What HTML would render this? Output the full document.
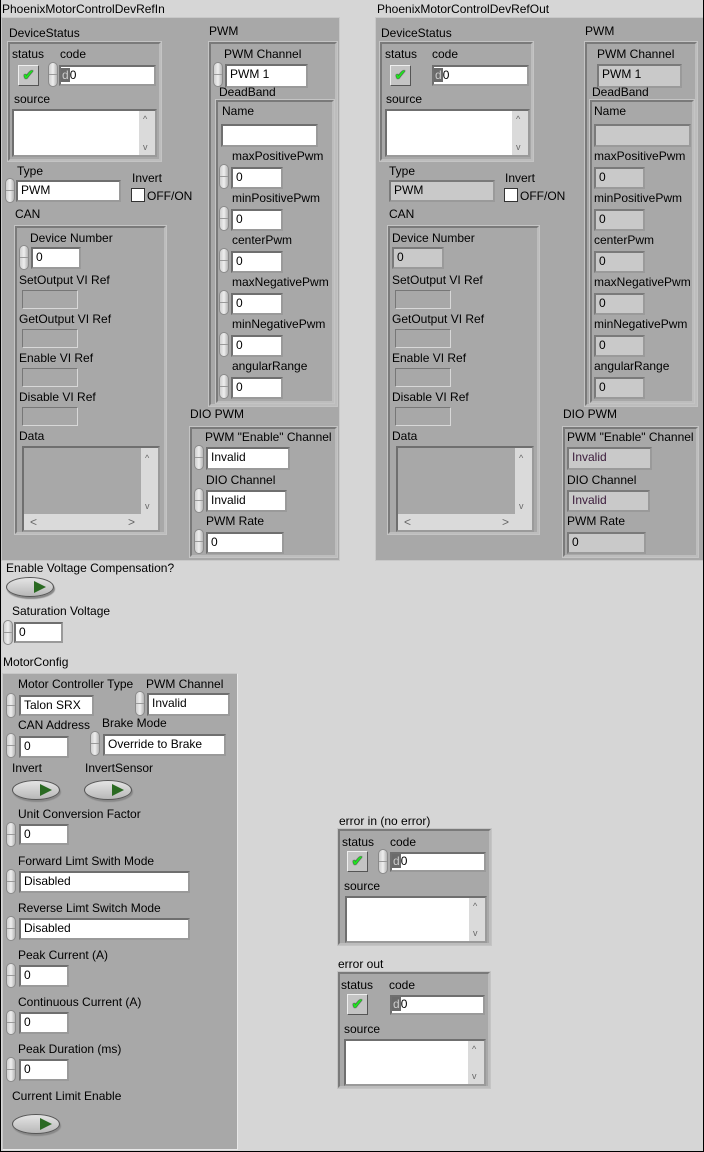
<!DOCTYPE html>
<html><head><meta charset="utf-8"><style>
*{box-sizing:border-box;margin:0;padding:0}
body{width:704px;height:1152px;background:#d6d6d6;font-family:"Liberation Sans",Tahoma,sans-serif;font-size:12px;color:#000;position:relative;overflow:hidden}
#frame{position:absolute;left:0;top:0;width:704px;height:1152px;border:1px solid #000;border-top:none;pointer-events:none}
div,span{position:absolute}
.l{white-space:nowrap;line-height:14px}
.c{background:#a8a8a8;border:2px solid #8c8c8c;border-color:#7a7a7a #bdbdbd #bdbdbd #7a7a7a;box-shadow:0 0 0 1px #c4c4c4}
.o{background:#a8a8a8;border:1px solid #c8c8c8}
.b{background:#fff;border:2px solid;border-color:#6f6f6f #9a9a9a #9a9a9a #6f6f6f;line-height:16px;padding-left:3px;white-space:nowrap}
.i{background:#c9c9c9;border:2px solid;border-color:#7a7a7a #9a9a9a #9a9a9a #7a7a7a;line-height:16px;padding-left:3px;white-space:nowrap}
.r{background:#a8a8a8;border:1px solid;border-color:#777 #d8d8d8 #d8d8d8 #777}
.s{width:10px;height:25px;border-radius:5px;background:linear-gradient(90deg,#cfcfcf,#eeeeee 50%,#b5b5b5);border:1px solid #8a8a8a}
.s:after{content:"";position:absolute;left:0;right:0;top:11px;height:1px;background:#999}
.ck{width:21px;height:21px;background:#c4c4c4;border:1px solid;border-color:#eee #555 #555 #eee;color:#22e022;font-size:15px;line-height:19px;text-align:center;text-shadow:0 0 1px #000,0 0 1px #000}
.tg{width:48px;height:20px;border-radius:50%;background:linear-gradient(#e4e4e4,#b8b8b8);border:1px solid #555;box-shadow:1px 2px 1px #888}
.tg:after{content:"";position:absolute;left:27px;top:3px;border-left:12px solid #2a6a22;border-top:6px solid transparent;border-bottom:6px solid transparent}
.cb{width:14px;height:14px;background:#fff;border:1px solid #333}
.sb{position:absolute;right:0;top:0;bottom:0;width:16px;background:#dadada;color:#666;font-size:9px;text-align:center}
.pu{color:#3a1a3a}
</style></head><body>

<!-- ===== IN cluster ===== -->
<div class="l" style="left:2px;top:2px">PhoenixMotorControlDevRefIn</div>
<div class="o" style="left:1px;top:17px;width:339px;height:544px"></div>
<div class="l" style="left:9px;top:26px">DeviceStatus</div>
<div class="c" style="left:8px;top:42px;width:153px;height:119px"></div>
<div class="l" style="left:12px;top:47px">status</div>
<div class="l" style="left:60px;top:47px">code</div>
<div class="ck" style="left:18px;top:65px">✔</div>
<div class="s" style="left:48px;top:62px"></div>
<div class="b" style="left:59px;top:65px;width:97px;height:21px;padding-left:0"><span style="position:static;background:#6b6b6b;color:#ccc;padding:0 1px">d</span>0</div>
<div class="l" style="left:14px;top:92px">source</div>
<div class="b" style="left:12px;top:109px;width:145px;height:48px"><div class="sb"><span style="left:4px;top:0">^</span><span style="left:4px;top:28px">v</span></div></div>
<div class="l" style="left:17px;top:164px">Type</div>
<div class="s" style="left:5px;top:178px"></div>
<div class="b" style="left:16px;top:180px;width:105px;height:22px">PWM</div>
<div class="l" style="left:132px;top:171px">Invert</div>
<div class="cb" style="left:131px;top:188px"></div>
<div class="l" style="left:147px;top:189px">OFF/ON</div>
<div class="l" style="left:15px;top:207px">CAN</div>
<div class="c" style="left:15px;top:226px;width:151px;height:308px"></div>
<div class="l" style="left:30px;top:231px">Device Number</div>
<div class="s" style="left:19px;top:245px"></div>
<div class="b" style="left:31px;top:247px;width:50px;height:22px">0</div>
<div class="l" style="left:19px;top:273px">SetOutput VI Ref</div>
<div class="r" style="left:22px;top:290px;width:56px;height:19px"></div>
<div class="l" style="left:19px;top:312px">GetOutput VI Ref</div>
<div class="r" style="left:22px;top:329px;width:56px;height:19px"></div>
<div class="l" style="left:19px;top:351px">Enable VI Ref</div>
<div class="r" style="left:22px;top:368px;width:56px;height:19px"></div>
<div class="l" style="left:19px;top:390px">Disable VI Ref</div>
<div class="r" style="left:22px;top:407px;width:56px;height:19px"></div>
<div class="l" style="left:19px;top:429px">Data</div>
<div class="b" style="left:22px;top:446px;width:138px;height:86px;background:#a8a8a8;padding:0"><div class="sb" style="bottom:16px;width:17px"><span style="left:4px;top:2px">^</span><span style="left:4px;top:50px">v</span></div><div style="left:0;right:0;bottom:0;height:16px;background:#dadada;color:#666"><span style="left:6px;top:0">&lt;</span><span style="left:104px;top:0">&gt;</span></div></div>

<div class="l" style="left:209px;top:24px">PWM</div>
<div class="c" style="left:209px;top:42px;width:128px;height:364px"></div>
<div class="l" style="left:224px;top:47px">PWM Channel</div>
<div class="s" style="left:213px;top:62px"></div>
<div class="b" style="left:225px;top:64px;width:83px;height:24px">PWM 1</div>
<div class="l" style="left:219px;top:85px">DeadBand</div>
<div class="c" style="left:216px;top:100px;width:118px;height:303px"></div>
<div class="l" style="left:222px;top:104px">Name</div>
<div class="b" style="left:221px;top:124px;width:97px;height:23px"></div>
<div class="l" style="left:232px;top:149px">maxPositivePwm</div>
<div class="s" style="left:219px;top:164px"></div>
<div class="b" style="left:231px;top:167px;width:52px;height:22px">0</div>
<div class="l" style="left:232px;top:191px">minPositivePwm</div>
<div class="s" style="left:219px;top:206px"></div>
<div class="b" style="left:231px;top:209px;width:52px;height:22px">0</div>
<div class="l" style="left:232px;top:233px">centerPwm</div>
<div class="s" style="left:219px;top:248px"></div>
<div class="b" style="left:231px;top:251px;width:52px;height:22px">0</div>
<div class="l" style="left:232px;top:275px">maxNegativePwm</div>
<div class="s" style="left:219px;top:290px"></div>
<div class="b" style="left:231px;top:293px;width:52px;height:22px">0</div>
<div class="l" style="left:232px;top:317px">minNegativePwm</div>
<div class="s" style="left:219px;top:332px"></div>
<div class="b" style="left:231px;top:335px;width:52px;height:22px">0</div>
<div class="l" style="left:232px;top:359px">angularRange</div>
<div class="s" style="left:219px;top:374px"></div>
<div class="b" style="left:231px;top:377px;width:52px;height:22px">0</div>
<div class="l" style="left:190px;top:407px">DIO PWM</div>
<div class="c" style="left:190px;top:427px;width:147px;height:130px"></div>
<div class="l" style="left:205px;top:430px">PWM "Enable" Channel</div>
<div class="s" style="left:194px;top:445px"></div>
<div class="b" style="left:206px;top:447px;width:84px;height:23px">Invalid</div>
<div class="l" style="left:206px;top:473px">DIO Channel</div>
<div class="s" style="left:194px;top:488px"></div>
<div class="b" style="left:206px;top:490px;width:81px;height:22px">Invalid</div>
<div class="l" style="left:206px;top:514px">PWM Rate</div>
<div class="s" style="left:194px;top:529px"></div>
<div class="b" style="left:206px;top:532px;width:78px;height:22px">0</div>

<!-- ===== OUT cluster ===== -->
<div class="l" style="left:377px;top:2px">PhoenixMotorControlDevRefOut</div>
<div class="o" style="left:375px;top:17px;width:329px;height:544px"></div>
<div class="l" style="left:381px;top:26px">DeviceStatus</div>
<div class="c" style="left:380px;top:42px;width:153px;height:119px"></div>
<div class="l" style="left:385px;top:47px">status</div>
<div class="l" style="left:432px;top:47px">code</div>
<div class="ck" style="left:390px;top:65px">✔</div>
<div class="b" style="left:432px;top:65px;width:97px;height:21px;padding-left:0"><span style="position:static;background:#6b6b6b;color:#ccc;padding:0 1px">d</span>0</div>
<div class="l" style="left:386px;top:92px">source</div>
<div class="b" style="left:385px;top:109px;width:145px;height:48px"><div class="sb"><span style="left:4px;top:0">^</span><span style="left:4px;top:28px">v</span></div></div>
<div class="l" style="left:389px;top:164px">Type</div>
<div class="i" style="left:389px;top:180px;width:106px;height:22px">PWM</div>
<div class="l" style="left:505px;top:171px">Invert</div>
<div class="cb" style="left:504px;top:188px"></div>
<div class="l" style="left:520px;top:189px">OFF/ON</div>
<div class="l" style="left:389px;top:207px">CAN</div>
<div class="c" style="left:388px;top:226px;width:151px;height:308px"></div>
<div class="l" style="left:392px;top:231px">Device Number</div>
<div class="i" style="left:392px;top:247px;width:52px;height:22px">0</div>
<div class="l" style="left:392px;top:273px">SetOutput VI Ref</div>
<div class="r" style="left:395px;top:290px;width:56px;height:19px"></div>
<div class="l" style="left:392px;top:312px">GetOutput VI Ref</div>
<div class="r" style="left:395px;top:329px;width:56px;height:19px"></div>
<div class="l" style="left:392px;top:351px">Enable VI Ref</div>
<div class="r" style="left:395px;top:368px;width:56px;height:19px"></div>
<div class="l" style="left:392px;top:390px">Disable VI Ref</div>
<div class="r" style="left:395px;top:407px;width:56px;height:19px"></div>
<div class="l" style="left:392px;top:429px">Data</div>
<div class="b" style="left:396px;top:446px;width:138px;height:86px;background:#a8a8a8;padding:0"><div class="sb" style="bottom:16px;width:17px"><span style="left:4px;top:2px">^</span><span style="left:4px;top:50px">v</span></div><div style="left:0;right:0;bottom:0;height:16px;background:#dadada;color:#666"><span style="left:6px;top:0">&lt;</span><span style="left:104px;top:0">&gt;</span></div></div>

<div class="l" style="left:585px;top:24px">PWM</div>
<div class="c" style="left:585px;top:42px;width:112px;height:364px"></div>
<div class="l" style="left:597px;top:47px">PWM Channel</div>
<div class="i" style="left:597px;top:64px;width:85px;height:24px">PWM 1</div>
<div class="l" style="left:592px;top:85px">DeadBand</div>
<div class="c" style="left:590px;top:100px;width:104px;height:303px"></div>
<div class="l" style="left:594px;top:104px">Name</div>
<div class="i" style="left:594px;top:124px;width:97px;height:23px"></div>
<div class="l" style="left:594px;top:149px">maxPositivePwm</div>
<div class="i" style="left:594px;top:167px;width:51px;height:22px">0</div>
<div class="l" style="left:594px;top:191px">minPositivePwm</div>
<div class="i" style="left:594px;top:209px;width:51px;height:22px">0</div>
<div class="l" style="left:594px;top:233px">centerPwm</div>
<div class="i" style="left:594px;top:251px;width:51px;height:22px">0</div>
<div class="l" style="left:594px;top:275px">maxNegativePwm</div>
<div class="i" style="left:594px;top:293px;width:51px;height:22px">0</div>
<div class="l" style="left:594px;top:317px">minNegativePwm</div>
<div class="i" style="left:594px;top:335px;width:51px;height:22px">0</div>
<div class="l" style="left:594px;top:359px">angularRange</div>
<div class="i" style="left:594px;top:377px;width:51px;height:22px">0</div>
<div class="l" style="left:563px;top:407px">DIO PWM</div>
<div class="c" style="left:563px;top:427px;width:135px;height:130px"></div>
<div class="l" style="left:567px;top:430px">PWM "Enable" Channel</div>
<div class="i pu" style="left:567px;top:447px;width:85px;height:23px">Invalid</div>
<div class="l" style="left:567px;top:473px">DIO Channel</div>
<div class="i pu" style="left:567px;top:490px;width:83px;height:22px">Invalid</div>
<div class="l" style="left:567px;top:514px">PWM Rate</div>
<div class="i" style="left:567px;top:532px;width:79px;height:22px">0</div>

<!-- ===== middle ===== -->
<div class="l" style="left:6px;top:561px">Enable Voltage Compensation?</div>
<div class="tg" style="left:6px;top:577px"></div>
<div class="l" style="left:12px;top:604px">Saturation Voltage</div>
<div class="s" style="left:3px;top:620px"></div>
<div class="b" style="left:14px;top:622px;width:49px;height:21px">0</div>

<!-- ===== MotorConfig ===== -->
<div class="l" style="left:3px;top:655px">MotorConfig</div>
<div class="o" style="left:2px;top:673px;width:236px;height:477px;border-color:#c8c8c8 #e8e8e8 #e8e8e8 #c8c8c8"></div>
<div class="l" style="left:18px;top:677px">Motor Controller Type</div>
<div class="l" style="left:146px;top:677px">PWM Channel</div>
<div class="s" style="left:6px;top:693px"></div>
<div class="b" style="left:19px;top:695px;width:75px;height:21px">Talon SRX</div>
<div class="s" style="left:135px;top:691px"></div>
<div class="b" style="left:147px;top:693px;width:83px;height:23px">Invalid</div>
<div class="l" style="left:18px;top:718px">CAN Address</div>
<div class="l" style="left:102px;top:716px">Brake Mode</div>
<div class="s" style="left:6px;top:733px"></div>
<div class="b" style="left:19px;top:736px;width:50px;height:22px">0</div>
<div class="s" style="left:90px;top:731px"></div>
<div class="b" style="left:103px;top:734px;width:123px;height:22px">Override to Brake</div>
<div class="l" style="left:12px;top:761px">Invert</div>
<div class="l" style="left:85px;top:761px">InvertSensor</div>
<div class="tg" style="left:12px;top:780px"></div>
<div class="tg" style="left:84px;top:780px"></div>
<div class="l" style="left:18px;top:807px">Unit Conversion Factor</div>
<div class="s" style="left:6px;top:822px"></div>
<div class="b" style="left:19px;top:824px;width:50px;height:21px">0</div>
<div class="l" style="left:18px;top:854px">Forward Limt Swith Mode</div>
<div class="s" style="left:6px;top:869px"></div>
<div class="b" style="left:19px;top:871px;width:171px;height:22px">Disabled</div>
<div class="l" style="left:18px;top:901px">Reverse Limt Switch Mode</div>
<div class="s" style="left:6px;top:916px"></div>
<div class="b" style="left:19px;top:918px;width:171px;height:22px">Disabled</div>
<div class="l" style="left:18px;top:948px">Peak Current (A)</div>
<div class="s" style="left:6px;top:963px"></div>
<div class="b" style="left:19px;top:965px;width:50px;height:22px">0</div>
<div class="l" style="left:18px;top:995px">Continuous Current (A)</div>
<div class="s" style="left:6px;top:1010px"></div>
<div class="b" style="left:19px;top:1012px;width:50px;height:22px">0</div>
<div class="l" style="left:18px;top:1042px">Peak Duration (ms)</div>
<div class="s" style="left:6px;top:1057px"></div>
<div class="b" style="left:19px;top:1059px;width:50px;height:22px">0</div>
<div class="l" style="left:12px;top:1089px">Current Limit Enable</div>
<div class="tg" style="left:12px;top:1114px"></div>

<!-- ===== error in ===== -->
<div class="l" style="left:339px;top:814px">error in (no error)</div>
<div class="c" style="left:338px;top:829px;width:153px;height:116px"></div>
<div class="l" style="left:342px;top:835px">status</div>
<div class="l" style="left:390px;top:835px">code</div>
<div class="ck" style="left:347px;top:851px">✔</div>
<div class="s" style="left:378px;top:849px"></div>
<div class="b" style="left:390px;top:852px;width:96px;height:20px;padding-left:0;line-height:15px"><span style="position:static;background:#6b6b6b;color:#ccc;padding:0 1px">d</span>0</div>
<div class="l" style="left:344px;top:879px">source</div>
<div class="b" style="left:345px;top:896px;width:142px;height:47px"><div class="sb"><span style="left:4px;top:0">^</span><span style="left:4px;top:27px">v</span></div></div>

<!-- ===== error out ===== -->
<div class="l" style="left:338px;top:957px">error out</div>
<div class="c" style="left:338px;top:972px;width:152px;height:116px"></div>
<div class="l" style="left:341px;top:978px">status</div>
<div class="l" style="left:389px;top:978px">code</div>
<div class="ck" style="left:347px;top:994px">✔</div>
<div class="b" style="left:390px;top:995px;width:95px;height:20px;padding-left:0;line-height:15px"><span style="position:static;background:#6b6b6b;color:#ccc;padding:0 1px">d</span>0</div>
<div class="l" style="left:344px;top:1022px">source</div>
<div class="b" style="left:344px;top:1039px;width:142px;height:47px"><div class="sb"><span style="left:4px;top:0">^</span><span style="left:4px;top:27px">v</span></div></div>

<div id="frame"></div>
</body></html>
